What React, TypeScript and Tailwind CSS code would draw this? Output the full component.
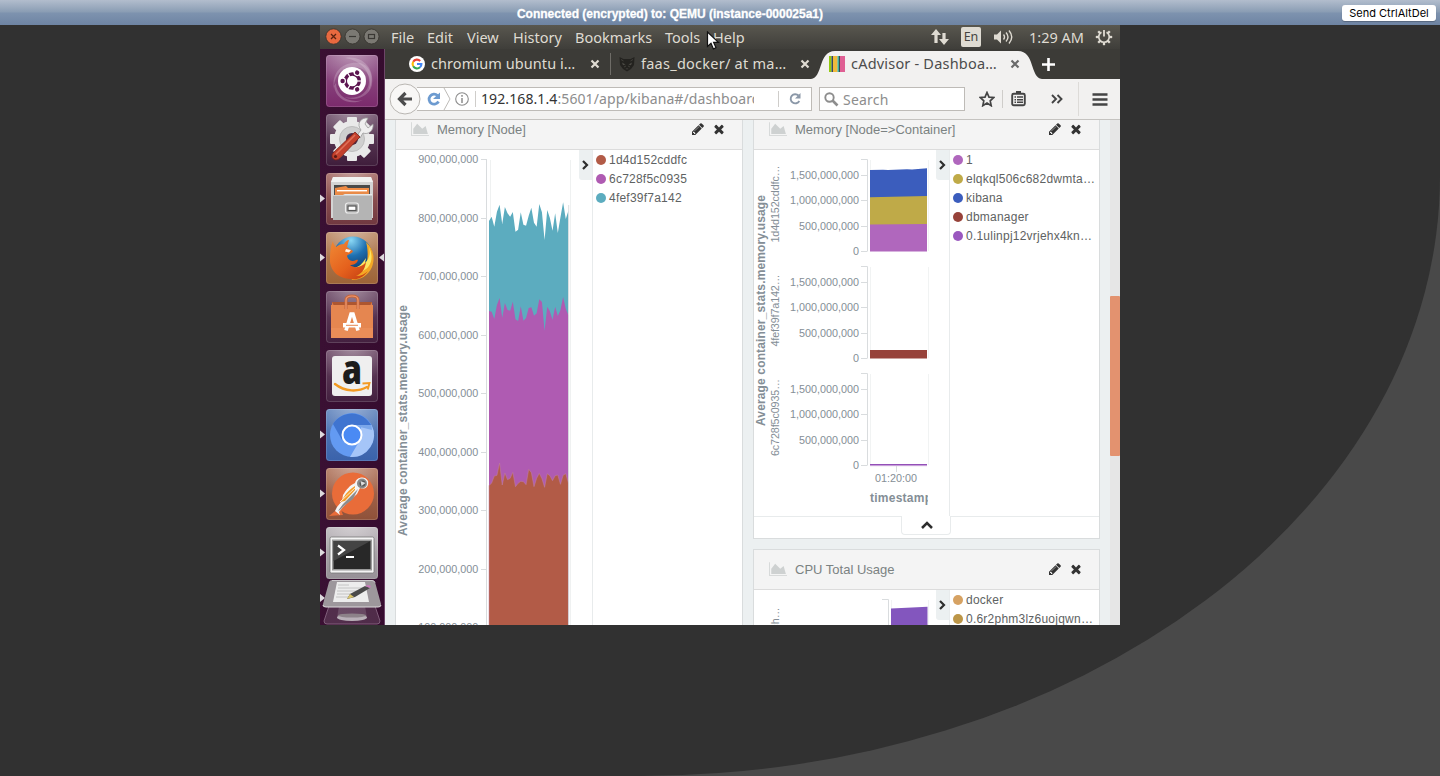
import type { ReactNode } from "react";

const UBUNTU = "font-['Noto_Sans','Open_Sans',sans-serif]";

/* ---------- launcher ---------- */

function Tile({ from, to, children }: { from: string; to: string; children: ReactNode }) {
  const id = `tile${from.slice(1)}${to.slice(1)}`;
  return (
    <svg width="52" height="52" viewBox="0 0 52 52" className="block shrink-0">
      <defs>
        <linearGradient id={id} x1="0" y1="0" x2="0" y2="1">
          <stop offset="0" stopColor={from} />
          <stop offset="1" stopColor={to} />
        </linearGradient>
        <radialGradient id={`${id}s`} cx="0.5" cy="-0.1" r="0.75">
          <stop offset="0" stopColor="#fff" stopOpacity="0.4" />
          <stop offset="1" stopColor="#fff" stopOpacity="0" />
        </radialGradient>
      </defs>
      <rect width="52" height="52" rx="3.5" fill={`url(#${id})`} />
      <rect width="52" height="52" rx="3.5" fill={`url(#${id}s)`} />
      <rect x="0.5" y="0.5" width="51" height="51" rx="3" fill="none" stroke="#fff" strokeOpacity="0.15" />
      {children}
    </svg>
  );
}

function LauncherRow({ running, focused, children }: { running?: boolean; focused?: boolean; children: ReactNode }) {
  return (
    <div className="flex h-[52px] items-center">
      <svg width="6" height="10" viewBox="0 0 6 10" className="shrink-0">
        {running && <path d="M0 0.500l5 4-5 4z" fill="#dedade" />}
      </svg>
      {children}
      <svg width="6" height="10" viewBox="0 0 6 10" className="shrink-0">
        {focused && <path d="M6 0.500L1 4.500l5 4z" fill="#dedade" />}
      </svg>
    </div>
  );
}

function DashIcon() {
  return (
    <Tile from="#93588a" to="#7b2a6c">
      <path d="M8 34C5 16 18 6 34 8c12 3 15 18 8 29C48 22 40 12 27 12 14 12 8 22 8 34z" fill="#fff" opacity="0.2" />
      <path d="M19 3c16-3 30 9 27 27-3 12-17 17-28 12 13 3 24-3 25-15C44 14 32 5 19 3z" fill="#fff" opacity="0.2" />
      <path d="M10 28c0 12 12 21 27 17C24 51 10 45 8 31z" fill="#fff" opacity="0.22" />
      <circle cx="26" cy="26" r="14" fill="#fff" />
      <circle cx="26.3" cy="26" r="7" fill="none" stroke="#5c1450" strokeWidth="3.4" />
      {[0, 120, 240].map((a) => (
        <path key={a} d="M30 26h6" stroke="#fff" strokeWidth="1.2" transform={`rotate(${a} 26.3 26)`} />
      ))}
      {[60, 180, 300].map((a) => (
        <g key={a} transform={`rotate(${a} 26.3 26)`}>
          <circle cx="36" cy="26" r="3.4" fill="#fff" />
          <circle cx="36" cy="26" r="2.2" fill="#5c1450" />
        </g>
      ))}
    </Tile>
  );
}

function SettingsIcon() {
  return (
    <Tile from="#6a4a66" to="#3f1d3b">
      <g fill="#e9e9e9">
        {[0, 45, 90, 135].map((a) => (
          <rect key={a} x="21" y="3" width="10" height="44" rx="1" transform={`rotate(${a} 26 25)`} />
        ))}
        <circle cx="26" cy="25" r="18" />
      </g>
      <circle cx="26" cy="25" r="12.5" fill="#cfcfcf" stroke="#bdbdbd" />
      <circle cx="26" cy="25" r="6" fill="#4a2945" />
      <path d="M32 20l3-4c-5-6 0-13 7-12l-3 6 3 4 5-4c1 7-5 11-10 9l-3 5z" fill="#efefef" stroke="#9b9b9b" strokeWidth="0.8" />
      <path d="M29 18l5 5-21 22c-5 3-9-2-6-6z" fill="#c3402c" stroke="#7c2115" strokeWidth="0.8" />
      <path d="M29 21L10 40" stroke="#df7058" strokeWidth="1.6" />
      <circle cx="9.5" cy="42.500" r="1.6" fill="#5b1a12" />
    </Tile>
  );
}

function FilesIcon() {
  return (
    <Tile from="#a1625d" to="#703840">
      <path d="M7 4h38l2 5v36H5V9z" fill="#d4d4d4" />
      <path d="M7 4h38l2 5H5z" fill="#f2f2f2" />
      <path d="M8 12h36v12H8z" fill="#4a4a4a" />
      <path d="M9 15l11-2 2 2h21v8H9z" fill="#f08b45" />
      <path d="M11 17h30v1.4H11z" fill="#fff" />
      <path d="M9 19h34v4H9z" fill="#e98b48" />
      <path d="M7 22h10l2-1h27v26H7z" fill="#b4b4b4" />
      <path d="M7 22h10l2-1h27v1.5H7z" fill="#e8e8e8" />
      <rect x="19.5" y="30" width="13" height="10" rx="2.5" fill="#a9a9a9" stroke="#ededed" strokeWidth="1.2" />
      <rect x="22" y="33" width="8" height="4.500" fill="#fff" stroke="#555" strokeWidth="1.2" />
    </Tile>
  );
}

function FirefoxIcon() {
  return (
    <Tile from="#b98560" to="#9c6337">
      <defs>
        <radialGradient id="globe" cx="0.45" cy="0.1" r="0.8">
          <stop offset="0" stopColor="#8ad8f5" />
          <stop offset="0.5" stopColor="#1e6fb0" />
          <stop offset="1" stopColor="#103868" />
        </radialGradient>
        <linearGradient id="fox" x1="0" y1="0" x2="0.9" y2="1">
          <stop offset="0" stopColor="#f08a35" />
          <stop offset="0.6" stopColor="#e5611d" />
          <stop offset="1" stopColor="#c64013" />
        </linearGradient>
      </defs>
      <circle cx="27" cy="24" r="19.500" fill="url(#globe)" />
      <path d="M40 10c8 7 9 17 6 25-4 9-12 13-20 13l-2-6c9 0 15-4 17-12 1-6 1-13-1-20z" fill="#f4a825" />
      <path d="M43 15c2 7 0 12-4 16l1-5c-4 6-7 9-12 10l4 4c12-1 17-13 11-25z" fill="#fce561" />
      <path d="M7 9c0 3 2 5 3 6 2-2 5-3 8-3 1-2 3-4 5-4l-2 7c2 2 5 3 6 4-1 3-5 3-6 5 1 4 4 5 6 5s3-2 5-1c-1 4-5 5-8 5 5 4 12 2 16-3-1 8-5 12-10 14 5 0 9-2 12-5-5 7-11 9-17 8C11 47 3 37 4 26c0-7 1-13 3-17z" fill="url(#fox)" />
      <path d="M20 17l5 1-2 2.500-4-1z" fill="#fff3e4" />
    </Tile>
  );
}

function SoftwareIcon() {
  return (
    <Tile from="#694563" to="#43203f">
      <path d="M6 11h40l1 36H5z" fill="#e07c48" />
      <path d="M6 11h40l-2 4H8z" fill="#ad5630" />
      <path d="M5 14h42v33H5z" fill="#e58650" />
      <path d="M5 37h42v10H5z" fill="#ea8d58" />
      <path d="M20 18V9q0-4 6-4t6 4v9" fill="none" stroke="#c6653b" strokeWidth="3" />
      <path d="M20 18V9q0-4 6-4t6 4v9" fill="none" stroke="#f09a70" strokeWidth="1.2" />
      <path d="M20 39.500l5-16.500h2l5 16.500" fill="none" stroke="#fff" strokeWidth="3.6" />
      <path d="M17 32h18v4.500H17z" fill="#fff" />
      <path d="M20 33.800h12v1H20z" fill="#e58650" />
    </Tile>
  );
}

function AmazonIcon() {
  return (
    <Tile from="#694563" to="#43203f">
      <rect x="6" y="6" width="40" height="40" rx="3" fill="#efefef" />
      <text x="16" y="33.500" fontFamily="Open Sans, Noto Sans, sans-serif" fontWeight="800" fontSize="40" textLength="20" lengthAdjust="spacingAndGlyphs" fill="#1c1c1c">
        a
      </text>
      <path d="M9 34c10 8 23 8 32 3" fill="none" stroke="#f39a22" strokeWidth="2.4" strokeLinecap="round" />
      <path d="M36.500 33.500l7-.5-1.700 6.500" fill="none" stroke="#f39a22" strokeWidth="1.900" />
    </Tile>
  );
}

function ChromiumIcon() {
  return (
    <Tile from="#5a7fba" to="#3a62ab">
      <circle cx="26" cy="26" r="22" fill="#639af2" />
      <path d="M7 15A22 22 0 0145 16H26L16 31z" fill="#3f74d0" />
      <path d="M45.500 16A22 22 0 0124 48l10-17 1-15z" fill="#a5c5f8" />
      <path d="M26 16h19.500l.5 5-12-3z" fill="#7ba7ea" />
      <circle cx="26" cy="26" r="9.500" fill="#4a8af4" stroke="#fff" strokeWidth="2" />
    </Tile>
  );
}

function PostmanIcon() {
  return (
    <Tile from="#ae7057" to="#8f5139">
      <circle cx="27" cy="25.500" r="21" fill="#e96c39" />
      <path d="M3 48l11-9 3 8z" fill="#e96c39" />
      <path d="M29 15c1-6 10-8 13-2 1 6-3 9-8 7l-3 6-14 13-4 5 1 3-5-4 2-4 5-6 1-6c3-5 7-10 12-12z" fill="#f4f4f4" />
      <path d="M29 18c-5 3-9 7-11 11l-4 5 5-1 10-11z" fill="#f59c28" />
      <path d="M32 21L17 36l-5 7 2-1 4-4 9-7z" fill="#8d8d8d" />
      <path d="M30 19L14 34" stroke="#fff" strokeWidth="0.800" />
      <circle cx="36" cy="15.500" r="5" fill="#8a8a8a" />
      <circle cx="36.500" cy="15.500" r="3" fill="#555" />
      <path d="M34.500 13l5 2-4 3z" fill="#ddd" />
    </Tile>
  );
}

function TerminalIcon() {
  return (
    <Tile from="#b9b3b8" to="#969096">
      <rect x="4" y="10" width="44" height="36" rx="1.500" fill="#f4f4f4" stroke="#777" strokeWidth="0.8" />
      <rect x="6" y="12.500" width="40" height="31" fill="#9a9a9a" />
      <rect x="7.500" y="14" width="37" height="28" fill="#282828" />
      <path d="M7.500 14h37L7.500 34z" fill="#444" />
      <path d="M12 18.500l6 4.500-6 4.500" fill="none" stroke="#fff" strokeWidth="2.200" />
      <path d="M20 30h8" stroke="#fff" strokeWidth="2" />
    </Tile>
  );
}

function FoldedItems() {
  return (
    <svg width="64" height="46" viewBox="0 0 64 46" className="block shrink-0">
      <path d="M0 14l5 4-5 4z" fill="#dedade" />
      <path d="M9 26h46l5 15q0 3-3 3H7q-3 0-3-3z" fill="#fff" opacity="0.13" />
      <path d="M9 26L4 41q0 3 3 3h50q3 0 3-3l-5-15" fill="none" stroke="#8d6c88" strokeWidth="0.800" />
      <path d="M19 26h26l2 12H17z" fill="#fff" opacity="0.14" />
      <ellipse cx="32" cy="37.500" rx="15" ry="3.500" fill="#b9b0b8" />
      <ellipse cx="32" cy="35.500" rx="14" ry="2" fill="#8d8289" />
      <path d="M12 0h40q2 0 3 2l6 22q0 3-3 3H5q-3 0-2-3L9 2q1-2 3-2z" fill="#9d979c" />
      <path d="M12 0.500h40q2 0 3 2" fill="none" stroke="#ccc8cc" />
      <path d="M3 25q0 2 3 2h52q3 0 3-2" fill="none" stroke="#dbd8db" />
      <path d="M17 2h28l4 20H13z" fill="#ededed" />
      <path d="M18 5h11M18 8h26M17 11h26M17 14h20M16 17h16" stroke="#c4c4c4" strokeWidth="1" />
      <path d="M27 19l3-5 15-8 5 2-15 9z" fill="#4a4a4a" />
      <path d="M27 19l3-5 4 3z" fill="#d9c46a" />
      <path d="M45 6l5 2 1-2-3-1z" fill="#c879b9" />
    </svg>
  );
}

function Launcher() {
  return (
    <div className="flex h-full w-[65px] shrink-0 flex-col gap-[7px] overflow-hidden border-r border-[#6d4568] bg-linear-to-r from-[#3a1033] to-[#360c2f] pt-1.5">
      <LauncherRow><DashIcon /></LauncherRow>
      <LauncherRow><SettingsIcon /></LauncherRow>
      <LauncherRow running><FilesIcon /></LauncherRow>
      <LauncherRow running focused><FirefoxIcon /></LauncherRow>
      <LauncherRow><SoftwareIcon /></LauncherRow>
      <LauncherRow><AmazonIcon /></LauncherRow>
      <LauncherRow running><ChromiumIcon /></LauncherRow>
      <LauncherRow running><PostmanIcon /></LauncherRow>
      <div className="flex flex-col">
        <LauncherRow running><TerminalIcon /></LauncherRow>
        <div className="mt-px"><FoldedItems /></div>
      </div>
    </div>
  );
}

/* ---------- top panel ---------- */

function WindowButtons() {
  return (
    <svg width="62" height="24" viewBox="0 0 62 24" className="block shrink-0">
      <circle cx="13.500" cy="11.500" r="7.700" fill="#e8693f" stroke="#33312c" strokeWidth="0.800" />
      <path d="M11 9l5 5M16 9l-5 5" stroke="#5a2311" strokeWidth="1.300" />
      <circle cx="32.500" cy="11.500" r="7.500" fill="#7b7973" stroke="#33312c" strokeWidth="0.800" />
      <path d="M29 11.500h7" stroke="#3a3834" strokeWidth="1.200" />
      <circle cx="51.500" cy="11.500" r="7.500" fill="#7b7973" stroke="#33312c" strokeWidth="0.800" />
      <rect x="48.500" y="9.500" width="6" height="4" fill="none" stroke="#3a3834" strokeWidth="1.200" />
    </svg>
  );
}

function MenuBar() {
  return (
    <div className={`flex h-6 shrink-0 items-center bg-linear-to-b from-[#59574f] to-[#3f3e3a] text-[14.500px] leading-6 text-[#dfdbd2] ${UBUNTU}`}>
      <WindowButtons />
      <div className="flex h-6 flex-1 pl-[9px]">
        <span className="w-9">File</span>
        <span className="w-10">Edit</span>
        <span className="w-[46px]">View</span>
        <span className="w-[62px]">History</span>
        <span className="w-[90px]">Bookmarks</span>
        <span className="w-12">Tools</span>
        <span>Help</span>
      </div>
      <svg width="18" height="18" viewBox="0 0 18 18" className="mr-3 block" fill="#dfdbd2">
        <path d="M5 1l5 6H6.600v8H3.400V7H0z" />
        <path d="M13 17l-5-6h3.400V5h3.200v6H18z" />
      </svg>
      <span className="flex h-5 w-5 items-center justify-center rounded-[2px] bg-[#dfdbd2] text-[12.500px] text-[#45433e]">En</span>
      <svg width="22" height="18" viewBox="0 0 22 18" className="ml-3 block" fill="none" stroke="#dfdbd2" strokeWidth="1.400">
        <path d="M1 6.500h3l4-4v13l-4-4H1z" fill="#dfdbd2" stroke="none" />
        <path d="M10.500 6.500q2 2.500 0 5M13 4.500q4 4.500 0 9M16 2.500q5.500 6.500 0 13" />
      </svg>
      <span className="ml-[14px] w-[66px] whitespace-nowrap">1:29 AM</span>
      <svg width="18" height="18" viewBox="0 0 18 18" className="mr-[7px] block" fill="none" stroke="#dfdbd2">
        <path d="M6.500 4.300a5.300 5.300 0 105 0" strokeWidth="1.700" />
        <path d="M9 2v6.500" strokeWidth="1.800" />
        {[45, 90, 135, 180, 225, 270, 315].map((a) => (
          <path key={a} d="M9 0.800v2.700" strokeWidth="2.300" transform={`rotate(${a} 9 9)`} />
        ))}
      </svg>
    </div>
  );
}

/* ---------- browser chrome ---------- */

function TabClose({ color }: { color: string }) {
  return (
    <svg width="10" height="10" viewBox="0 0 10 10" className="block shrink-0">
      <path d="M1.500 1.500l7 7M8.500 1.500l-7 7" stroke={color} strokeWidth="2.200" />
    </svg>
  );
}

function TabStrip() {
  return (
    <div className={`flex h-[30px] shrink-0 items-center bg-[#3c3b37] text-[14.500px] tracking-[0.080px] text-[#dfdbd2] ${UBUNTU}`}>
      <div className="flex w-[225px] items-center pl-6">
        <svg width="16" height="16" viewBox="0 0 16 16" className="mr-1.5 block shrink-0" fill="none" strokeWidth="2.100">
          <circle cx="8" cy="8" r="8" fill="#fff" />
          <path d="M11.200 5A4.400 4.400 0 004.200 5.800" stroke="#ea4335" />
          <path d="M4.200 5.800a4.400 4.400 0 000 4.400" stroke="#fbbc05" />
          <path d="M4.200 10.200a4.400 4.400 0 006.800 1.100" stroke="#34a853" />
          <path d="M11 11.300A4.400 4.400 0 0012.400 8H8" stroke="#4285f4" />
        </svg>
        <span className="w-[159px] whitespace-nowrap">chromium ubuntu i…</span>
        <TabClose color="#dfdbd2" />
      </div>
      <div className="h-[22px] w-px bg-[#6e6c67]" />
      <div className="flex w-[200px] items-center pl-2">
        <svg width="16" height="16" viewBox="0 0 16 16" className="mr-1.5 block shrink-0">
          <path d="M0.500 1l4 2h7l4-2-.5 8-3 4-4 2.500L4 13 1 9z" fill="#23221f" />
          <path d="M3 6.500l3.500 2-2.500.8zM13 6.500l-3.500 2 2.500.8zM6.500 12.500h3l-1.500 1z" fill="#4c4a45" />
          <path d="M2 3.500l2.500 1.500M14 3.500L11.500 5M5 11l2-1M11 11l-2-1" stroke="#4c4a45" strokeWidth="0.700" />
        </svg>
        <span className="w-[159px] tracking-[0.250px] whitespace-nowrap">faas_docker/ at ma…</span>
        <TabClose color="#dfdbd2" />
      </div>
      <div className="relative flex h-[30px] w-[231px] items-center pl-[18px] text-[#4c4c4c]">
        <svg width="231" height="30" viewBox="0 0 231 30" className="absolute inset-0 block">
          <path d="M0 30C12 29 7 2 24 2H207C224 2 219 29 231 30z" fill="#f2f1f0" />
        </svg>
        <svg width="16" height="16" viewBox="0 0 16 16" className="relative mr-1.5 block shrink-0">
          <path d="M0 0h2.500v16H0z" fill="#93c90e" />
          <path d="M2.500 0H4v16H2.500z" fill="#36485c" />
          <path d="M4 0h4.500v16H4z" fill="#f0b93a" />
          <path d="M8.500 0H10v16H8.500z" fill="#3cae9e" />
          <path d="M10 0h1v16h-1z" fill="#41474a" />
          <path d="M11 0h5v16h-5z" fill="#df5f93" />
        </svg>
        <span className="relative w-[159px] tracking-[0.200px] whitespace-nowrap">cAdvisor - Dashboa…</span>
        <span className="relative"><TabClose color="#6a6a6a" /></span>
      </div>
      <svg width="13" height="13" viewBox="0 0 13 13" className="block">
        <path d="M6.500 0v13M0 6.500h13" stroke="#fff" strokeWidth="2.600" />
      </svg>
    </div>
  );
}

function NavBar() {
  return (
    <div className={`flex h-[41px] shrink-0 items-center border-b border-[#c5c3c0] bg-[#f2f1f0] text-[14px] ${UBUNTU}`}>
      <svg width="32" height="32" viewBox="0 0 32 32" className="relative ml-1 block shrink-0">
        <circle cx="16" cy="16" r="15" fill="#f8f7f6" stroke="#b9b6b2" />
        <path d="M10 16h13M16.500 10L10.500 16l6 6" fill="none" stroke="#4c4c4c" strokeWidth="3.200" />
      </svg>
      <div className="-ml-1 flex h-6 w-[395px] shrink-0 items-center border border-l-0 border-[#bebbb7] bg-white">
        <svg width="46" height="22" viewBox="0 0 46 22" className="block shrink-0" fill="none">
          <path d="M20.500 7.500A5 5 0 1021.500 13.500" stroke="#6d9bd0" strokeWidth="2.800" />
          <path d="M23 4.500v6.500h-7z" fill="#6d9bd0" />
          <path d="M27 0l6 11-6 11" stroke="#bebbb7" />
        </svg>
        <svg width="14" height="14" viewBox="0 0 14 14" className="-ml-2 block shrink-0">
          <circle cx="7" cy="7" r="6.300" fill="none" stroke="#8c8c8c" strokeWidth="1.100" />
          <path d="M7 3v1.700M7 6v5" stroke="#8c8c8c" strokeWidth="1.500" />
        </svg>
        <div className="ml-[6px] h-4 w-px shrink-0 bg-[#cfcdca]" />
        <div className="ml-[5px] w-[273px] shrink-0 overflow-hidden leading-[22px] tracking-[0.100px] whitespace-nowrap text-[#8d8d8d]">
          <span className="text-[#333]">192.168.1.4</span>:5601/app/kibana#/dashboard
        </div>
        <div className="ml-6 h-4 w-px shrink-0 bg-[#cfcdca]" />
        <svg width="14" height="14" viewBox="0 0 14 14" className="ml-[9px] block shrink-0">
          <path d="M10.500 3.500A4.600 4.600 0 1011.300 9" fill="none" stroke="#8b98a8" strokeWidth="1.900" />
          <path d="M12.500 1v5.500H7z" fill="#8b98a8" />
        </svg>
      </div>
      <div className="ml-[7px] flex h-6 w-[146px] shrink-0 items-center border border-[#bebbb7] bg-white pl-1 text-[#8d8d8d]">
        <svg width="15" height="15" viewBox="0 0 15 15" className="mr-1 block" fill="none" stroke="#8d8d8d">
          <circle cx="5.500" cy="5.500" r="4.200" strokeWidth="1.900" />
          <path d="M8.500 8.500l5 5" strokeWidth="2.600" />
        </svg>
        <span className="tracking-[0.200px]">Search</span>
      </div>
      <svg width="16" height="16" viewBox="0 0 16 16" className="ml-[14px] block shrink-0">
        <path d="M8 1.500l2 4.600 4.800.4-3.600 3.300 1 4.900L8 12.100l-4.200 2.600 1-4.900L1.200 6.500 6 6.100z" fill="none" stroke="#444" strokeWidth="1.700" />
      </svg>
      <div className="ml-[7px] h-[18px] w-px bg-[#cfcdca]" />
      <svg width="15" height="16" viewBox="0 0 15 16" className="ml-2 block shrink-0">
        <path d="M5 0h5v3H5z" fill="#444" />
        <rect x="1.200" y="2.700" width="12.600" height="11.600" rx="1.500" fill="none" stroke="#444" strokeWidth="1.900" />
        <path d="M3.500 6h1.500M6 6h6M3.500 8.700h1.500M6 8.700h6M3.500 11.300h1.500M6 11.300h6" stroke="#444" strokeWidth="1.400" />
      </svg>
      <svg width="12" height="10" viewBox="0 0 12 10" className="ml-[25px] block shrink-0">
        <path d="M1 1l4 4-4 4M6.500 1l4 4-4 4" fill="none" stroke="#444" strokeWidth="1.900" />
      </svg>
      <div className="ml-[15px] h-[34px] w-px bg-[#dddbd8]" />
      <svg width="16" height="13" viewBox="0 0 16 13" className="ml-[13px] block shrink-0">
        <path d="M0.500 1.500h15M0.500 6.500h15M0.500 11.500h15" stroke="#444" strokeWidth="2.600" />
      </svg>
    </div>
  );
}

/* ---------- dashboard ---------- */

function PanelHeader({ title }: { title: string }) {
  return (
    <div className="flex h-10 shrink-0 items-center border-b border-[#dcdcdc] bg-[#f4f4f4] pr-4 pl-[15px] font-['Liberation_Sans',Arial,sans-serif] text-[13px] text-[#7b8282]">
      <svg width="18" height="16" viewBox="0 0 2048 1792" className="mr-2 mb-0.5 block" fill="#ced1d1">
        <path d="M2048 1580v84h-2048v-1536h84v1452h1964zm-384-1024l256 896h-1664v-576l448-576 576 576z" />
      </svg>
      <span className="flex-1">{title}</span>
      <svg width="14" height="14" viewBox="0 0 1792 1792" className="mr-[7px] mb-px block" fill="#333">
        <path d="M491 1536l91-91-235-235-91 91v107h128v128h107zm523-928q0-22-22-22-10 0-17 7l-542 542q-7 7-7 17 0 22 22 22 10 0 17-7l542-542q7-7 7-17zm-54-192l416 416-832 832h-416v-416zm683 96q0 53-37 90l-166 166-416-416 166-165q36-38 90-38 53 0 91 38l235 234q37 39 37 91z" />
      </svg>
      <svg width="14" height="14" viewBox="0 0 1792 1792" className="mb-px block" fill="#333">
        <path d="M1490 1322q0 40-28 68l-136 136q-28 28-68 28t-68-28l-294-294-294 294q-28 28-68 28t-68-28l-136-136q-28-28-28-68t28-68l294-294-294-294q-28-28-28-68t28-68l136-136q28-28 68-28t68 28l294 294 294-294q28-28 68-28t68 28l136 136q28 28 28 68t-28 68l-294 294 294 294q28 28 28 68z" />
      </svg>
    </div>
  );
}

function Legend({ items }: { items: [string, string][] }) {
  return (
    <>
      <div className="flex h-[30px] w-[14px] shrink-0 items-center justify-center rounded-bl-[3px] bg-[#ecf0f1] pr-px">
        <svg width="7" height="10" viewBox="0 0 7 10">
          <path d="M1 1l4 4-4 4" fill="none" stroke="#2d2d2d" strokeWidth="2.200" />
        </svg>
      </div>
      <div className="-ml-px flex flex-1 flex-col self-stretch border-l border-[#e8ebec] pl-[3px] font-['Liberation_Sans',Arial,sans-serif] text-[12px] tracking-[0.230px] text-[#5e6262]">
        {items.map(([name, color]) => (
          <div key={name} className="flex h-[19px] items-center gap-[3px] whitespace-nowrap">
            <svg width="10" height="10" className="block shrink-0">
              <circle cx="5" cy="5" r="5" fill={color} />
            </svg>
            {name}
          </div>
        ))}
      </div>
    </>
  );
}

const FONT = "Liberation Sans, Arial, sans-serif";
const LABEL = "#848e96";
const GRID = "#d9dcde";

// Upper edges of the three stacked series, in thirds of a pixel.
const TOP = [303, 290, 320, 275, 254, 312, 261, 280, 290, 276, 335, 329, 277, 314, 317, 287, 263, 308, 320, 252, 277, 360, 270, 294, 332, 280, 339, 292, 247, 297, 272];
const MID = [573, 575, 597, 555, 534, 593, 549, 570, 572, 545, 598, 603, 559, 602, 594, 564, 562, 587, 580, 538, 546, 632, 560, 574, 599, 560, 588, 570, 531, 566, 586];
const LOW = [1097, 1089, 1068, 1066, 1029, 1095, 1059, 1079, 1075, 1057, 1100, 1090, 1084, 1085, 1094, 1048, 1058, 1100, 1075, 1060, 1076, 1102, 1061, 1067, 1082, 1067, 1065, 1093, 1066, 1061, 1089];

function area(values: number[]) {
  const step = 79.4 / (values.length - 1);
  const pts = values.map((v, i) => `${(93 + i * step).toFixed(2)},${(v / 3 - 30).toFixed(2)}`);
  return `M93,480L${pts.join("L")}L172.400,480Z`;
}

function NodeMemoryChart() {
  const ticks = [900, 800, 700, 600, 500, 400, 300, 200, 100];
  return (
    <svg width="183" height="495" viewBox="0 0 183 495" className="block shrink-0" fontFamily={FONT} fontSize="10.800" fill={LABEL}>
      <text transform="translate(11 386) rotate(-90)" fontSize="12" fontWeight="700" textLength="231">
        Average container_stats.memory.usage
      </text>
      <path d="M94.500 10v480M174.500 10v480" stroke="#eff1f1" />
      <path d="M90.500 9.500v480" stroke={GRID} />
      {ticks.map((t, i) => {
        const y = 9.5 + i * 58.5;
        return (
          <g key={t}>
            <path d={`M85 ${Math.round(y - 0.5) + 0.5}h6`} stroke={GRID} />
            <text x="82.300" y={y + 3.8} textAnchor="end" textLength="60">{`${t},000,000`}</text>
          </g>
        );
      })}
      <path d={area(TOP)} fill="#5cacbf" />
      <path d={area(MID)} fill="#af5bb2" />
      <path d={area(LOW)} fill="#b25b47" stroke="#c080a0" strokeWidth="0.500" />
      <path d="M172.700 55v435" stroke="#dcdfe1" />
    </svg>
  );
}

function ContainerMemoryChart() {
  const rows = ["1d4d152cddfc…", "4fef39f7a142…", "6c728f5c0935…"];
  const ticks: [string, number][] = [["1,500,000,000", 25], ["1,000,000,000", 50], ["500,000,000", 76], ["0", 101]];
  return (
    <svg width="182" height="366" viewBox="0 0 182 366" className="block shrink-0" fontFamily={FONT} fontSize="10.800" fill={LABEL}>
      <defs>
        <clipPath id="plot"><rect x="110" y="0" width="64" height="366" /></clipPath>
      </defs>
      <text transform="translate(11 276) rotate(-90)" fontSize="12" fontWeight="700" textLength="231">
        Average container_stats.memory.usage
      </text>
      {rows.map((name, r) => (
        <g key={name} transform={`translate(0 ${r * 107})`}>
          <text transform={`translate(25 ${[92.5, 89.5, 92][r]}) rotate(-90)`} textLength={[77, 72, 77][r]}>{name}</text>
          <path d="M116.500 10v91M174.500 10v91" stroke="#f1f3f3" />
          <path d="M107 9.500h6.500v92" fill="none" stroke={GRID} />
          {ticks.map(([label, y]) => (
            <g key={label}>
              <path d={`M107 ${y + 0.5}h6`} stroke={GRID} />
              <text x="105" y={y + 4} textAnchor="end">{label}</text>
            </g>
          ))}
        </g>
      ))}
      <path d="M116 20l13-.3 5 .4 19-.8 5 .2 15-1.200v30h-57z" fill="#3b5dbd" />
      <path d="M116 47.300l57-1.200v30h-57z" fill="#bfaa48" />
      <path d="M116 74.600l57-.6v27.500h-57z" fill="#b067bd" />
      <path d="M116 200h57v8.500h-57z" fill="#97423a" />
      <path d="M116 314h57v1.500h-57z" fill="#9350b8" />
      <path d="M116 315.700h57" stroke="#c59ad8" strokeWidth="0.700" />
      <path d="M142.500 316v6" stroke={GRID} />
      <text x="142" y="332" textAnchor="middle">01:20:00</text>
      <text x="116" y="352" fontSize="12" fontWeight="700" clipPath="url(#plot)" textLength="62">timestamp</text>
    </svg>
  );
}

function CpuChart() {
  return (
    <svg width="182" height="36" viewBox="0 0 182 36" className="block shrink-0" fontFamily={FONT} fontSize="10.800" fill={LABEL}>
      <text transform="translate(25 17.500) rotate(-90)" textAnchor="end">ch…</text>
      <path d="M128 9.500h6.500V36" fill="none" stroke={GRID} />
      <path d="M137.500 10v26M174.500 10v26" stroke="#f1f3f3" />
      <path d="M137 18.500l36.500-1.800V36H137z" fill="#8356be" />
      <path d="M155 36l18.500-1.200V36z" fill="#a34fa8" />
    </svg>
  );
}

function Dashboard() {
  return (
    <div className="flex min-h-0 flex-1 overflow-hidden bg-[#ecf0f1]">
      <div className="flex flex-1 gap-2.5 pl-2.5">
        <div className="-mt-[11px] -mb-5 flex w-[348px] shrink-0 flex-col border border-[#d9dcdd] bg-white">
          <PanelHeader title="Memory [Node]" />
          <div className="flex flex-1 items-start">
            <NodeMemoryChart />
            <Legend items={[["1d4d152cddfc", "#b25b47"], ["6c728f5c0935", "#af5bb2"], ["4fef39f7a142", "#5cacbf"]]} />
          </div>
        </div>
        <div className="-mt-[11px] flex w-[347px] shrink-0 flex-col gap-2.5">
          <div className="flex h-[430px] shrink-0 flex-col border border-[#d9dcdd] bg-white">
            <PanelHeader title="Memory [Node=>Container]" />
            <div className="flex h-[367px] shrink-0 items-start border-b border-[#e8ebec]">
              <ContainerMemoryChart />
              <Legend
                items={[
                  ["1", "#b067bd"],
                  ["elqkql506c682dwmta…", "#bfaa48"],
                  ["kibana", "#3b5dbd"],
                  ["dbmanager", "#97423a"],
                  ["0.1ulinpj12vrjehx4kn…", "#9a58bf"],
                ]}
              />
            </div>
            <div className="-mt-px ml-[147px] flex h-[19px] w-[50px] items-center justify-center rounded-b-[4px] border border-t-0 border-[#e8ebec] bg-white pl-px">
              <svg width="12" height="8" viewBox="0 0 12 8">
                <path d="M1 7l5-5 5 5" fill="none" stroke="#2d2d2d" strokeWidth="2.500" />
              </svg>
            </div>
          </div>
          <div className="flex h-[120px] shrink-0 flex-col border border-[#d9dcdd] bg-white">
            <PanelHeader title="CPU Total Usage" />
            <div className="flex flex-1 items-start">
              <CpuChart />
              <Legend items={[["docker", "#d6a263"], ["0.6r2phm3lz6uojqwn…", "#bc9648"]]} />
            </div>
          </div>
        </div>
      </div>
      <div className="w-2.5 shrink-0 bg-[#e6e6e6] pt-44">
        <div className="h-40 rounded-[1px] bg-[#e3926f]" />
      </div>
    </div>
  );
}

function Cursor() {
  return (
    <svg width="14" height="20" viewBox="0 0 14 20" className="absolute top-[6px] left-[386px] block">
      <path d="M1.500 1v14.500l3.500-3.200 2.400 5.600 2.600-1.100-2.400-5.500h4.800z" fill="#fff" stroke="#111" strokeWidth="1.200" />
    </svg>
  );
}

export default function App() {
  return (
    <div className="flex h-[776px] w-[1440px] flex-col overflow-hidden bg-[#494949]">
      <header className="flex h-[25px] shrink-0 items-center bg-[linear-gradient(to_bottom,#b2bdcd_0%,#899cb3_49%,#7e93af_51%,#6e84a3_100%)] pr-1 font-['Liberation_Sans',Arial,sans-serif]">
        <div className="flex-1 pt-[3px] pr-0.5 text-center text-[12px] font-bold text-white [-webkit-text-stroke:0.3px_white]">
          Connected (encrypted) to: QEMU (instance-000025a1)
        </div>
        <button className="mt-px flex h-4 w-[94px] items-center justify-center rounded-[3px] bg-white font-['Inter',sans-serif] text-[11px] whitespace-nowrap text-black shadow-[0_1px_1px_rgba(0,0,0,0.25)]">
          Send CtrlAltDel
        </button>
      </header>
      <main className="flex flex-1 items-start justify-center rounded-br-[800px_600px] bg-[#313131]">
        <div className="relative flex h-[600px] w-[800px] flex-col overflow-hidden">
          <MenuBar />
          <div className="flex min-h-0 flex-1">
            <Launcher />
            <div className="flex min-w-0 flex-1 flex-col">
              <TabStrip />
              <NavBar />
              <Dashboard />
            </div>
          </div>
          <Cursor />
        </div>
      </main>
    </div>
  );
}
